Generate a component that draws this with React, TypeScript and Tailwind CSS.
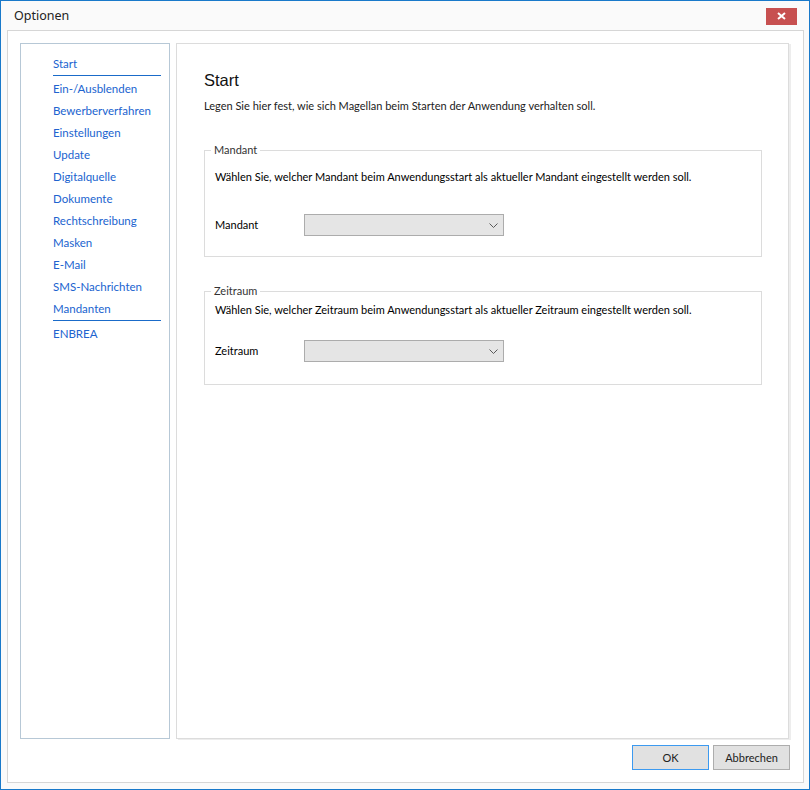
const navItems = [
  { label: "Start", line: true },
  { label: "Ein-/Ausblenden" },
  { label: "Bewerberverfahren" },
  { label: "Einstellungen" },
  { label: "Update" },
  { label: "Digitalquelle" },
  { label: "Dokumente" },
  { label: "Rechtschreibung" },
  { label: "Masken" },
  { label: "E-Mail" },
  { label: "SMS-Nachrichten" },
  { label: "Mandanten", line: true },
  { label: "ENBREA" },
];

function Combo() {
  return (
    <div className="w-[200px] h-[22px] bg-[#e5e5e5] border border-[#acacac] flex items-center justify-end pr-[5px]">
      <svg width="9" height="5" viewBox="0 0 9 5">
        <path d="M0.5 0.5 L4.5 4.5 L8.5 0.5" fill="none" stroke="#5a5a5a" strokeWidth="1" />
      </svg>
    </div>
  );
}

function Group({
  title,
  text,
  label,
  top,
  row,
}: {
  title: string;
  text: string;
  label: string;
  top: string;
  row: string;
}) {
  return (
    <fieldset className="border border-[#dcdcdc] px-[10px] mr-[26px]">
      <legend className="ml-[-4px] px-[3px] text-[#333]">{title}</legend>
      <div className={top}>{text}</div>
      <div className={"flex items-center " + row}>
        <div className="w-[89px]">{label}</div>
        <Combo />
      </div>
    </fieldset>
  );
}

export default function App() {
  return (
    <div
      className="w-[810px] h-[790px] border border-[#1979ca] bg-[#fafafa] flex flex-col text-[11px] leading-[16px] text-black"
      style={{ fontFamily: 'Lato, "Noto Sans", sans-serif' }}
    >
      <div className="h-[29px] flex items-center justify-between pl-[13px] pr-[12px]">
        <div className="text-[12.5px] text-[#222]" style={{ fontFamily: '"Noto Sans", sans-serif' }}>
          Optionen
        </div>
        <div className="w-[31px] h-[17px] bg-[#c75050] flex items-center justify-center mt-[1px]">
          <svg width="9" height="8" viewBox="0 0 9 8">
            <path d="M1 1 L8 7 M8 1 L1 7" stroke="white" strokeWidth="2" />
          </svg>
        </div>
      </div>

      <div className="flex-1 ml-[6px] mr-[5px] mb-[6px] border border-[#d6d6d6] bg-white flex flex-col px-[12px] pt-[12px] pb-[12px]">
        <div className="flex-1 flex gap-[6px]">
          <div className="w-[150px] border border-[#b7c8d6] pl-[32px] pt-[9px]">
            {navItems.map((it) => (
              <div key={it.label}>
                <div className="h-[22px] flex items-center text-[11.5px] text-[#2063cf]">{it.label}</div>
                {it.line && <div className="w-[108px] h-px bg-[#1a6bc9] mb-[2px]" />}
              </div>
            ))}
          </div>

          <div className="flex-1 border border-[#dcdcdc] shadow-[2px_1px_0_#ededed] mr-[2px] pl-[27px] pt-[26px]">
            <div
              className="text-[16.5px] leading-[20px] text-[#111]"
              style={{ fontFamily: '"Liberation Sans", Arial, sans-serif' }}
            >
              Start
            </div>
            <div className="mt-[8px] text-[#222]">
              Legen Sie hier fest, wie sich Magellan beim Starten der Anwendung verhalten soll.
            </div>

            <div className="mt-[28px]">
              <Group
                title="Mandant"
                text="Wählen Sie, welcher Mandant beim Anwendungsstart als aktueller Mandant eingestellt werden soll."
                label="Mandant"
                top="mt-[11px]"
                row="mt-[29px] mb-[20px]"
              />
            </div>
            <div className="mt-[26px]">
              <Group
                title="Zeitraum"
                text="Wählen Sie, welcher Zeitraum beim Anwendungsstart als aktueller Zeitraum eingestellt werden soll."
                label="Zeitraum"
                top="mt-[3px]"
                row="mt-[22px] mb-[22px]"
              />
            </div>
          </div>
        </div>

        <div className="flex justify-end gap-[4px] mt-[6px] mr-[1px]">
          <button className="w-[77px] h-[25px] bg-[#e1e1e1] border border-[#3c9af0] text-[#222]">OK</button>
          <button className="w-[77px] h-[25px] bg-[#e1e1e1] border border-[#adadad] text-[#222]">Abbrechen</button>
        </div>
      </div>
    </div>
  );
}
